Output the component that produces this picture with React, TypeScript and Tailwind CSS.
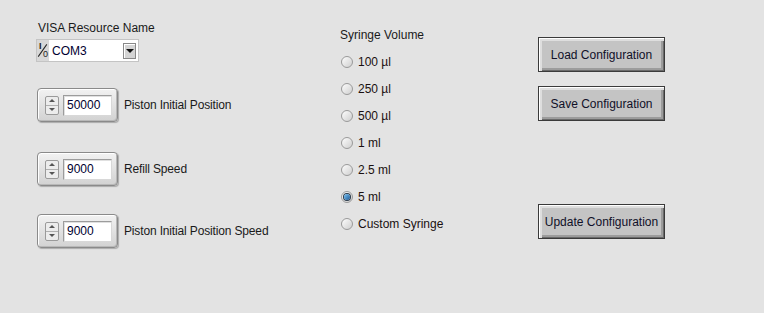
import React, { useState } from "react";

const font = "font-['Liberation_Sans',Arial,sans-serif]";

function Numeric({ value, label }: { value: string; label: string }) {
    return (
        <div className="flex items-center">
            <div className="ml-[1px] w-[81px] h-[34px] flex items-center rounded-[4px] border border-[#8a8a8a] bg-gradient-to-b from-[#f2f2f2] to-[#d2d2d2] shadow-[inset_1px_1px_0_#ffffff,inset_-1px_-1px_0_#b8b8b8,1px_1px_1px_rgba(0,0,0,0.25)]">
                <div className="ml-[7px] w-[14px] h-[19px] flex flex-col rounded-[2px] border border-[#9a9a9a] bg-[#ececec]">
                    <div className="flex-1 flex items-center justify-center border-b border-[#b0b0b0]">
                        <div className="w-0 h-0 border-l-[3px] border-r-[3px] border-b-[3px] border-l-transparent border-r-transparent border-b-[#555]" />
                    </div>
                    <div className="flex-1 flex items-center justify-center">
                        <div className="w-0 h-0 border-l-[3px] border-r-[3px] border-t-[3px] border-l-transparent border-r-transparent border-t-[#555]" />
                    </div>
                </div>
                <div className="ml-[4px] w-[49px] h-[21px] bg-white border border-[#9c9c9c] border-b-[#d8d8d8] border-r-[#d8d8d8] shadow-[inset_1px_1px_0_#e0e0e0] flex items-center pl-[3px] text-[12px] text-[#000030]">
                    {value}
                </div>
            </div>
            <div className="ml-[6px] text-[12px] tracking-[-0.15px] text-[#1a1a1a]">{label}</div>
        </div>
    );
}

function Radio({ label, checked, onClick }: { label: string; checked: boolean; onClick: () => void }) {
    return (
        <div className="h-[27px] flex items-center cursor-pointer" onClick={onClick}>
            <div className="ml-[1px] w-[12px] h-[12px] rounded-full border border-[#9a9a9a] bg-gradient-to-br from-[#fdfdfd] to-[#cfcfcf] flex items-center justify-center">
                {checked && (
                    <div className="w-[6px] h-[6px] rounded-full bg-gradient-to-br from-[#7cc4f4] to-[#1b5a96] shadow-[0_0_0_1px_#2a3a4a]" />
                )}
            </div>
            <div className="ml-[5px] text-[12px] text-[#1a1010]">{label}</div>
        </div>
    );
}

function LvButton({ label, className }: { label: string; className?: string }) {
    return (
        <button className={"w-[127px] h-[35px] border border-[#3a3a3a] bg-[#c4c4c4] text-[12px] text-[#101028] shadow-[inset_1px_1px_0_#ffffff,inset_3px_3px_0_#dedede,inset_-1px_-1px_0_#6a6a6a,inset_-3px_-3px_0_#9c9c9c] " + (className ?? "")}>
            {label}
        </button>
    );
}

function App() {
    const [volume, setVolume] = useState("5 ml");
    const volumes = ["100 µl", "250 µl", "500 µl", "1 ml", "2.5 ml", "5 ml", "Custom Syringe"];

    return (
        <div className={"w-[764px] h-[313px] bg-[#e3e3e3] flex " + font}>
            {/* left column */}
            <div className="ml-[36px] w-[304px] pt-[21px] flex flex-col">
                <div className="ml-[2px] text-[12px] leading-[15px] text-[#1a1a1a]">VISA Resource Name</div>
                <div className="mt-[3px] w-[103px] h-[23px] flex items-center border border-[#c4c4c4] bg-[#d8d8d8]">
                    <div className="relative w-[12px] h-[19px] text-[#222] leading-none">
                        <span className="absolute left-[2px] top-[1px] text-[9px] font-bold">I</span>
                        <span className="absolute left-[5px] top-[2px] w-[1px] h-[15px] bg-[#222] rotate-[35deg]" />
                        <span className="absolute left-[6px] bottom-[1px] text-[9px]">0</span>
                    </div>
                    <div className="flex-1 h-[21px] bg-white flex items-center justify-between pl-[3px] pr-[2px] text-[12px] text-[#000030]">
                        <span>COM3</span>
                        <div className="w-[13px] h-[16px] bg-[#d4d4d4] border border-[#888] shadow-[inset_1px_1px_0_#fff] flex items-center justify-center">
                            <div className="w-0 h-0 border-l-[4px] border-r-[4px] border-t-[4px] border-l-transparent border-r-transparent border-t-[#111]" />
                        </div>
                    </div>
                </div>
                <div className="mt-[26px]">
                    <Numeric value="50000" label="Piston Initial Position" />
                </div>
                <div className="mt-[30px]">
                    <Numeric value="9000" label="Refill Speed" />
                </div>
                <div className="mt-[28px]">
                    <Numeric value="9000" label="Piston Initial Position Speed" />
                </div>
            </div>

            {/* middle column */}
            <div className="w-[198px] pt-[28px] flex flex-col">
                <div className="text-[12px] leading-[15px] text-[#1a1a1a]">Syringe Volume</div>
                <div className="mt-[5px] flex flex-col">
                    {volumes.map((v) => (
                        <Radio key={v} label={v} checked={volume === v} onClick={() => setVolume(v)} />
                    ))}
                </div>
            </div>

            {/* right column */}
            <div className="pt-[37px] flex flex-col">
                <LvButton label="Load Configuration" />
                <LvButton label="Save Configuration" className="mt-[14px]" />
                <LvButton label="Update Configuration" className="mt-[83px]" />
            </div>
        </div>
    );
}

export default App;
